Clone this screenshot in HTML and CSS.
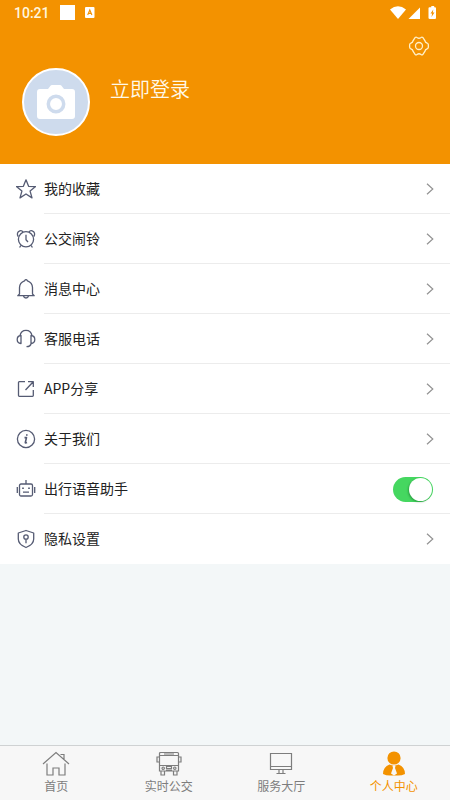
FILE: index.html
```html
<!DOCTYPE html>
<html lang="zh-CN">
<head>
<meta charset="utf-8">
<title>个人中心</title>
<link rel="stylesheet" href="styles.css">
</head>
<body>
<div class="app">
  <header class="header">
    <div class="status">
      <span class="time">10:21</span>
      <span class="square"></span>
      <svg class="badge" width="10" height="11" viewBox="0 0 10 11"><rect width="9.5" height="11" rx="1" fill="#fff"/><path d="M2.700 8 4.800 3 6.900 8M3.400 6.400h2.800" fill="none" stroke="#f39200" stroke-width="1.100"/></svg>
      <svg class="signals" width="48" height="14" viewBox="0 0 48 14" fill="#fff"><path d="M0 3.500Q8-2.800 16 3.500L8 13Z"/><path d="M30 1.500V13H18.500Z"/><path d="M39.500 1.200h1.800V0h2.900v1.200H45q1 0 1 1V12q0 1-1 1h-5q-1.500 0-1.500-1V2.200q0-1 1-1Z"/><path d="M43.300 3.500 40.500 7.400h1.600L41.500 11l3-4.600h-1.700Z" fill="#f39200"/></svg>
    </div>
    <div class="settings">
      <svg width="22" height="20" viewBox="0 0 22 20" fill="none" stroke="#fff0c8" stroke-width="1.300"><path d="M7.200 1.500Q8 .7 9 1.500Q11 3 13 1.500Q14 .7 14.800 1.500L17 4.800Q17.200 6.500 19 7Q20.800 7.800 20.300 10Q20.800 12.200 19 13Q17.200 13.500 17 15.200L14.800 18.500Q14 19.300 13 18.500Q11 17 9 18.500Q8 19.300 7.200 18.500L5 15.200Q4.800 13.500 3 13Q1.200 12.200 1.700 10Q1.200 7.800 3 7Q4.800 6.500 5 4.800Z"/><circle cx="11" cy="10" r="3.500"/></svg>
    </div>
    <div class="profile">
      <div class="avatar"><svg width="38" height="35" viewBox="0 0 38 35"><path d="M3 4h8l2.500-3.200Q14 0 15 0h8q1 0 1.500.8L27 4h8q3 0 3 3v24q0 3-3 3H3q-3 0-3-3V7q0-3 3-3Z" fill="#fff"/><circle cx="19" cy="19" r="7.700" fill="#fff" stroke="#cedbed" stroke-width="3.500"/></svg></div>
      <span class="login">立即登录</span>
    </div>
  </header>

  <main class="list">
    <div class="row"><svg class="icon" viewBox="0 0 20 20"><path d="m10 .8 2.600 6.500 7 .3-5.500 4.500 1.900 6.800L10 15l-6 3.900 1.900-6.800L.4 7.600l7-.3Z"/></svg><div class="cell"><span>我的收藏</span><svg class="arrow" viewBox="0 0 8 12"><path d="m1 .7 5.800 5.300L1 11.300"/></svg></div></div>
    <div class="row"><svg class="icon" viewBox="0 0 20 20"><circle cx="10" cy="10.300" r="7.600"/><path d="M2.200 7.500C.7 5.500 1.300 2.500 3.800 1.800Q6 1.200 7 3M17.800 7.500c1.500-2 .9-5-1.600-5.700Q14 1.200 13 3M10 5.800v5l2 2.200M4.800 16.500l-1.200 2M15.200 16.500l1.200 2"/></svg><div class="cell"><span>公交闹铃</span><svg class="arrow" viewBox="0 0 8 12"><path d="m1 .7 5.800 5.300L1 11.300"/></svg></div></div>
    <div class="row"><svg class="icon" viewBox="0 0 20 20"><path d="M3.500 15V8.500Q3.700 3.500 8.500 1.800Q10-.5 11.500 1.800Q16.300 3.500 16.500 8.500V15l1.700 1.700H1.800ZM7.500 17Q8 19 10 19t2.500-2"/></svg><div class="cell"><span>消息中心</span><svg class="arrow" viewBox="0 0 8 12"><path d="m1 .7 5.800 5.300L1 11.300"/></svg></div></div>
    <div class="row"><svg class="icon" viewBox="0 0 20 20"><path d="M4 6.500Q5 1.300 10 1.300t6 5.200M5 6.500v8Q1.200 14.200 1.200 10.500T5 6.500ZM15 6.500v8q3.800-.3 3.800-4T15 6.500ZM15.200 14.500Q14.500 17.500 10.500 17.700"/></svg><div class="cell"><span>客服电话</span><svg class="arrow" viewBox="0 0 8 12"><path d="m1 .7 5.800 5.300L1 11.300"/></svg></div></div>
    <div class="row"><svg class="icon" viewBox="0 0 20 20"><path d="M9 2.700H3.300q-.8 0-.8.800V16.500q0 .8.800.8h13.200q.8 0 .8-.8V11M12 2.700h5.300V8M17 3 9.500 11"/></svg><div class="cell"><span>APP分享</span><svg class="arrow" viewBox="0 0 8 12"><path d="m1 .7 5.800 5.300L1 11.300"/></svg></div></div>
    <div class="row"><svg class="icon" viewBox="0 0 20 20"><circle cx="10" cy="10" r="8.600"/><path d="M8.500 8.600h2L9.300 13.500q0 .8 1.700 0M10.800 5.300v1.500" stroke-width="1.600"/></svg><div class="cell"><span>关于我们</span><svg class="arrow" viewBox="0 0 8 12"><path d="m1 .7 5.800 5.300L1 11.300"/></svg></div></div>
    <div class="row"><svg class="icon" viewBox="0 0 20 20"><rect x="3.500" y="5" width="13" height="12" rx="1.500"/><path d="M10 1v4M1.300 8v6M18.700 8v6M7 13.200h6"/><path d="M7 8.500V10M13 8.500V10" stroke-width="1.700"/></svg><div class="cell"><span>出行语音助手</span><span class="switch"></span></div></div>
    <div class="row"><svg class="icon" viewBox="0 0 20 20"><path d="M10 1.500 17.700 4v6q0 5.500-7.700 8.500Q2.300 15.500 2.300 10V4Z"/><circle cx="10" cy="8" r="2.200"/><path d="M10 10.200v4"/></svg><div class="cell"><span>隐私设置</span><svg class="arrow" viewBox="0 0 8 12"><path d="m1 .7 5.800 5.300L1 11.300"/></svg></div></div>
  </main>

  <nav class="tabs">
    <div class="tab"><svg viewBox="0 0 28 26"><path d="M1 13 14 1.500 27 13M5 12.500V24h6v-7h6v7h6V12.500M18.500 3.500H22v4.500"/></svg><span>首页</span></div>
    <div class="tab"><svg viewBox="0 0 28 26"><path d="M4.500 4V2.500Q4.500 1.500 5.500 1.500h17q1 0 1 1V20h-19V4M4.500 4.500h19M9 3h10M4.500 14.500h19M4.500 6H2v5h2.500M23.500 6H26v5h-2.500M6 20v4h3.500v-4M18.500 20v4H22v-4M11.500 15.500h5v2h-5zM11 19h6"/><circle cx="8.200" cy="17.200" r="1.200"/><circle cx="19.800" cy="17.200" r="1.200"/></svg><span>实时公交</span></div>
    <div class="tab"><svg viewBox="0 0 28 26"><path d="M3.500 2.500h21v16h-21zM3.500 15.500h21M12 18.500V22M16 18.500V22M9.500 22.500h9"/></svg><span>服务大厅</span></div>
    <div class="tab active"><svg viewBox="0 0 28 26"><circle cx="14" cy="7" r="6.600"/><path d="M9.500 13.500 14 15l4.500-1.500Q25 16 25 23q-3 1.500-7 1.500H10Q6 24.500 3 23q0-7 6.500-9.500Z"/><path class="tie" d="M12.500 15h3L15 17l2 5.500-3 2-3-2L13 17Z"/></svg><span>个人中心</span></div>
  </nav>
</div>
</body>
</html>
```
FILE: styles.css
```css
* { box-sizing: border-box; }
body {
  margin: 0;
  font-family: "Noto Sans CJK SC", sans-serif;
  color: #222;
}
.app {
  width: 450px;
  height: 800px;
  display: flex;
  flex-direction: column;
  background: #f3f7f8;
  overflow: hidden;
}
svg { display: block; flex: none; }
.header {
  height: 164px;
  flex: none;
  background: #f39200;
  color: #fff;
}
.status {
  height: 26px;
  display: flex;
  align-items: center;
  padding: 0 17px 0 14px;
}
.time {
  font: 500 14px/26px Roboto, sans-serif;
  width: 46px;
  color: #fff6df;
}
.square { width: 15px; height: 15px; margin-bottom: 2px; background: #fff; }
.badge { margin-left: 10px; margin-bottom: 2px; }
.signals { margin-left: auto; margin-right: -5px; margin-bottom: 1px; }
.settings {
  display: flex;
  justify-content: flex-end;
  padding: 10px 20px 0 0;
}
.profile { display: flex; padding: 12px 22px 0; gap: 20px; }
.avatar {
  width: 68px;
  height: 68px;
  border: 2px solid #fff;
  border-radius: 50%;
  background: #cedbed;
  display: flex;
  align-items: center;
  justify-content: center;
}
.login { font-size: 20px; line-height: 30px; margin-top: 6px; font-weight: 350; color: #fff9e9; }
.list { background: #fff; flex: none; height: 400px; }
.row { height: 50px; display: flex; align-items: center; padding-left: 16px; gap: 8px; }
.icon { width: 20px; height: 20px; fill: none; stroke: #555b73; stroke-width: 1.3; stroke-linejoin: round; }
.cell {
  flex: 1;
  height: 50px;
  display: flex;
  align-items: center;
  justify-content: space-between;
  padding-right: 16px;
  border-bottom: 1px solid #ececec;
  font-size: 14px;
  line-height: 20px;
}
.cell > span:first-child { padding-bottom: 2px; }
.row:last-child .cell { border-bottom-color: transparent; }
.arrow { width: 8px; height: 12px; fill: none; stroke: #929292; stroke-width: 1.2; }
.switch {
  width: 40px;
  height: 25px;
  margin: 1px 1px 0 0;
  border-radius: 13px;
  background: #45d760;
  display: flex;
  justify-content: flex-end;
  padding: 1px;
}
.switch::after {
  content: "";
  width: 23px;
  height: 23px;
  border-radius: 50%;
  background: #fff;
  box-shadow: -1px 1px 2px rgba(0, 70, 20, .35);
}
.tabs {
  margin-top: auto;
  height: 55px;
  display: grid;
  grid-template-columns: repeat(4, 1fr);
  background: #f7f7f7;
  border-top: 1px solid #cfd2d3;
  padding-top: 5px;
}
.tab {
  display: flex;
  flex-direction: column;
  align-items: center;
  font-size: 12px;
  line-height: 18px;
  color: #7d7d7d;
}
.tab svg { width: 28px; height: 26px; fill: none; stroke: #7d7d7d; stroke-width: 1.2; }
.tab.active { color: #f39200; }
.tab.active svg { fill: #f39200; stroke: none; }
.tab.active .tie { fill: #f7f7f7; }
```
